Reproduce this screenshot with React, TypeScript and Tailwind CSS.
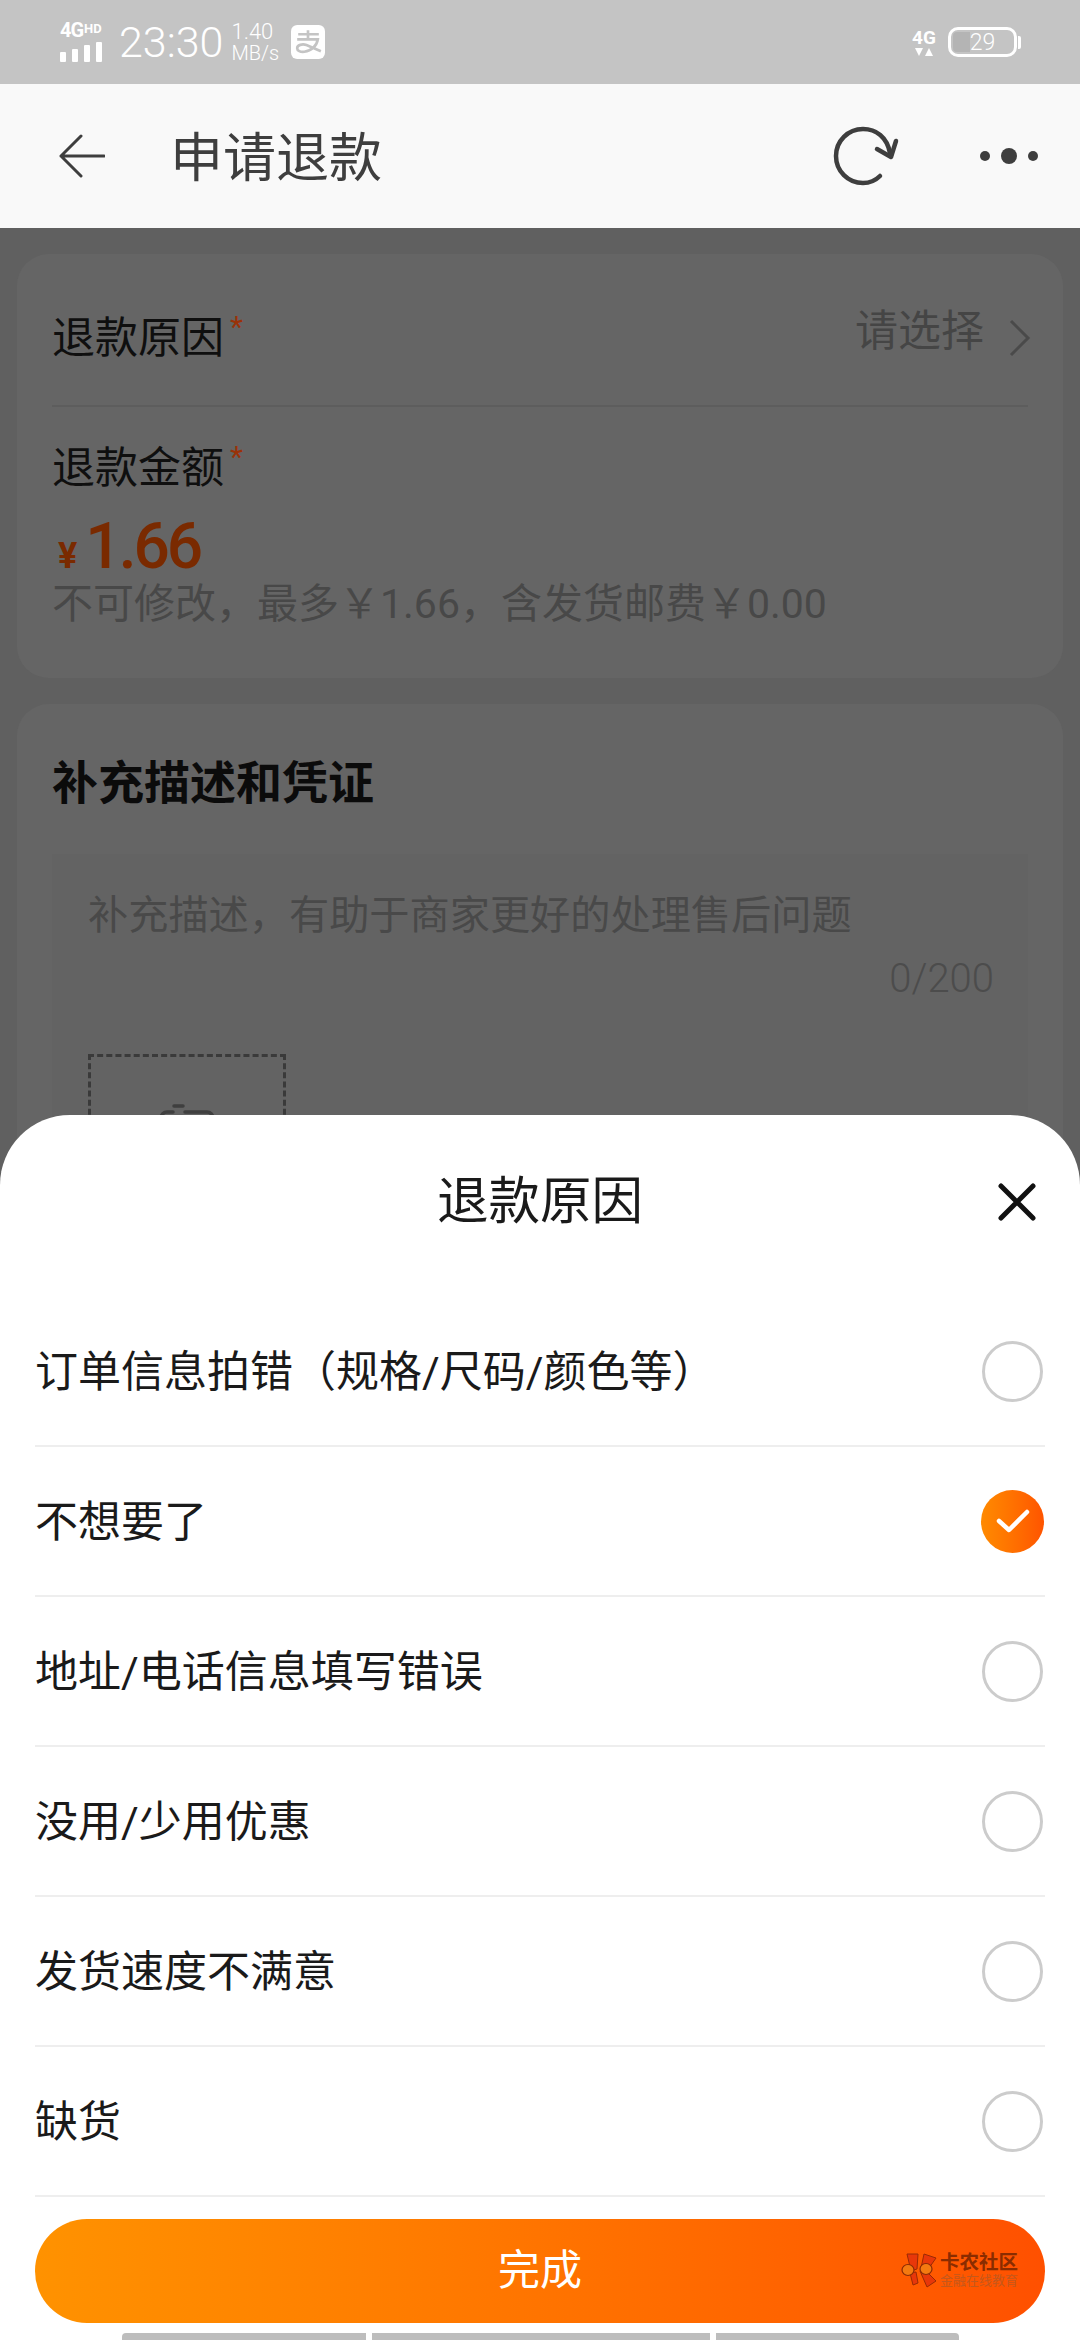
const reasons = [
  { label: "订单信息拍错（规格/尺码/颜色等）", checked: false },
  { label: "不想要了", checked: true },
  { label: "地址/电话信息填写错误", checked: false },
  { label: "没用/少用优惠", checked: false },
  { label: "发货速度不满意", checked: false },
  { label: "缺货", checked: false },
];

function StatusBar() {
  return (
    <div className="flex h-[84px] items-center bg-[#c4c4c4] pl-[60px] pr-[59px] text-white">
      <div className="flex w-[46px] flex-col">
        <div className="flex h-[16px] items-start font-bold leading-[16px]">
          <span className="text-[20px] tracking-[-1px]">4G</span>
          <span className="ml-[1px] text-[13px] leading-[13px]">HD</span>
        </div>
        <div className="mt-[4px] flex items-end gap-[6px]">
          <div className="h-[10px] w-[6px] rounded-[1px] bg-white" />
          <div className="h-[13px] w-[6px] rounded-[1px] bg-white" />
          <div className="h-[17px] w-[6px] rounded-[1px] bg-white" />
          <div className="h-[20px] w-[6px] rounded-[1px] bg-white" />
        </div>
      </div>
      <span className="ml-[13px] text-[43px] font-light leading-[44px]">23:30</span>
      <div className="ml-[8px] flex flex-col items-start font-light">
        <span className="text-[22px] leading-[23px]">1.40</span>
        <span className="text-[20px] leading-[21px]">MB/s</span>
      </div>
      <svg className="ml-[12px]" width="34" height="34" viewBox="0 0 33 33">
        <rect width="33" height="33" rx="6" fill="#fff" />
        <path d="M7 9h20M16.500 5v9M6 14h20c-1 6-6 11-13 12-4 .5-7-1-7-3.500 0-3 5-4.500 9-3l14 6" fill="none" stroke="#c4c4c4" strokeWidth="2.600" />
      </svg>
      <div className="ml-auto flex w-[26px] flex-col items-center">
        <span className="text-[19px] font-bold leading-[19px]">4G</span>
        <div className="mt-[1px] flex gap-[2px]">
          <div className="h-0 w-0 border-x-[4px] border-t-[8px] border-x-transparent border-t-white" />
          <div className="h-0 w-0 border-x-[4px] border-b-[8px] border-x-transparent border-b-white" />
        </div>
      </div>
      <div className="ml-[11px] flex items-center">
        <div className="relative flex h-[30px] w-[69px] items-center justify-center overflow-hidden rounded-[10px] border-[3px] border-white">
          <div className="absolute inset-y-[2px] left-[2px] w-[17px] rounded-l-[4px] bg-[#b4b4b4]" />
          <span className="relative text-[23px] font-light leading-none">29</span>
        </div>
        <div className="ml-[1px] h-[13px] w-[3px] rounded-r-[2px] bg-white" />
      </div>
    </div>
  );
}

function NavBar() {
  return (
    <div className="flex h-[144px] items-center bg-[#f9f9f9] pl-[59px] pr-[42px] text-[#3e3e3e]">
      <svg width="46" height="44" viewBox="0 0 46 44" fill="none" stroke="#3e3e3e" strokeWidth="3" strokeLinecap="round" strokeLinejoin="round">
        <path d="M45 22H2M22 2 2 22l20 20" />
      </svg>
      <span className="ml-[65px] mt-[6px] text-[53px] leading-none">申请退款</span>
      <svg className="ml-auto" width="66" height="60" viewBox="0 0 66 60" fill="none" stroke="#3e3e3e" strokeWidth="4.500" strokeLinecap="round" strokeLinejoin="round">
        <path d="M47 50C42 55 36 57 30 57 15 57 3 45 3 30S15 3 30 3c13 0 24 8 27 24" />
        <path d="M44 23l14 8 5-16" />
      </svg>
      <div className="ml-[81px] flex items-center gap-[11px]">
        <div className="h-[10px] w-[10px] rounded-full bg-[#3e3e3e]" />
        <div className="h-[16px] w-[16px] rounded-full bg-[#3e3e3e]" />
        <div className="h-[10px] w-[10px] rounded-full bg-[#3e3e3e]" />
      </div>
    </div>
  );
}

function Required() {
  return <span className="mb-[22px] ml-[6px] text-[30px] leading-none text-[#9a3208]">*</span>;
}

function RefundCard() {
  return (
    <div className="mx-[17px] mt-[26px] h-[424px] rounded-[32px] bg-[#656565] px-[35px]">
      <div className="flex h-[153px] items-center border-b-[2px] border-[#5d5d5d] pt-[17px]">
        <span className="text-[43px] leading-none text-[#0f0f0f]">退款原因</span>
        <Required />
        <span className="mb-[14px] ml-auto text-[43px] leading-none text-[#454545]">请选择</span>
        <svg className="-mr-[3px] ml-[25px]" width="22" height="38" viewBox="0 0 22 38" fill="none" stroke="#4a4a4a" strokeWidth="3">
          <path d="M2 2l17 17L2 36" />
        </svg>
      </div>
      <div className="mt-[35px] flex items-center">
        <span className="text-[43px] leading-none text-[#0f0f0f]">退款金额</span>
        <Required />
      </div>
      <div className="mt-[21px] flex items-baseline text-[#7a2a00]">
        <span className="ml-[6px] text-[36px] font-bold leading-[64px]">¥</span>
        <span className="ml-[8px] text-[64px] font-medium leading-[64px] tracking-[-3px]">1.66</span>
      </div>
      <div className="-mt-[7px] text-[41px] leading-[46px] text-[#484848]">不可修改，最多￥1.66，含发货邮费￥0.00</div>
    </div>
  );
}

function EvidenceCard() {
  return (
    <div className="mx-[17px] mt-[26px] flex-1 rounded-t-[32px] bg-[#656565] px-[35px]">
      <div className="pt-[56px] text-[46px] font-bold leading-[46px] text-[#0b0b0b]">补充描述和凭证</div>
      <div className="mt-[48px] flex h-[400px] flex-col bg-[#636363] pl-[36px] pr-[34px]">
        <div className="pt-[38px] text-[40.200px] leading-[48px] text-[#494949]">补充描述，有助于商家更好的处理售后问题</div>
        <div className="mt-[17px] self-end text-[40px] font-light leading-[44px] text-[#4c4c4c]">0/200</div>
        <div className="mt-[53px] flex h-[198px] w-[198px] justify-center border-[3px] border-dashed border-[#3a3a3a] pt-[47px]">
          <svg width="56" height="46" viewBox="0 0 56 46" fill="none" stroke="#3f3f3f" strokeWidth="3.500" strokeLinecap="round">
            <path d="M14 8H8a6 6 0 0 0-6 6v30M26 8h22a6 6 0 0 1 6 6v30M15 2h9" />
          </svg>
        </div>
      </div>
    </div>
  );
}

function ReasonRow({ label, checked }: { label: string; checked: boolean }) {
  return (
    <div className="flex h-[150px] items-center justify-between border-b-[2px] border-[#eeeeee] pr-[1px] text-[43px] text-[#1a1a1a]">
      <span className="mt-[2px] leading-none">{label}</span>
      {checked ? (
        <div className="flex h-[63px] w-[63px] items-center justify-center rounded-full bg-linear-to-r from-[#ff8a00] to-[#ff5400]">
          <svg width="34" height="26" viewBox="0 0 34 26" fill="none" stroke="#fff" strokeWidth="4.500" strokeLinecap="round" strokeLinejoin="round">
            <path d="M3 13l10 9L31 4" />
          </svg>
        </div>
      ) : (
        <div className="mx-[1px] h-[61px] w-[61px] rounded-full border-[3px] border-[#cccccc]" />
      )}
    </div>
  );
}

function WatermarkLogo() {
  return (
    <div className="flex items-center">
      <svg width="36" height="35" viewBox="0 0 36 35">
        <path d="M6 1h11l-1 15-6 2zM23 1l12 4-9 13-6-3zM9 20l6-1 2 11-5 2zM19 18l5-1 11 11-9 6z" fill="#e8370a" stroke="#9a2a05" strokeWidth="1" />
        <ellipse cx="7" cy="17" rx="6" ry="5.500" fill="#f47a10" stroke="#8a2a05" strokeWidth="1.200" />
        <ellipse cx="25" cy="16" rx="6" ry="5.500" fill="#f47a10" stroke="#8a2a05" strokeWidth="1.200" />
      </svg>
      <div className="ml-[3px] flex w-[79px] flex-col items-start">
        <span className="text-[19.500px] font-bold leading-[21px] text-[#8a2c00]">卡农社区</span>
        <span className="text-[13px] leading-[15px] text-[#c4581c]">金融在线教育</span>
      </div>
    </div>
  );
}

function ReasonSheet() {
  return (
    <div className="absolute inset-x-0 bottom-0 flex h-[1225px] flex-col rounded-t-[70px] bg-white">
      <div className="relative flex h-[182px] items-start justify-center pt-[61px]">
        <span className="text-[51.500px] leading-[52px] text-[#1a1a1a]">退款原因</span>
        <svg className="absolute right-[44px] top-[68px]" width="38" height="38" viewBox="0 0 38 38" fill="none" stroke="#111" strokeWidth="5" strokeLinecap="round">
          <path d="M3 3l32 32M35 3 3 35" />
        </svg>
      </div>
      <div className="mx-[35px] flex flex-col">
        {reasons.map((r) => (
          <ReasonRow key={r.label} label={r.label} checked={r.checked} />
        ))}
      </div>
      <div className="relative mx-[35px] mt-[22px] flex h-[104px] items-center justify-center rounded-full bg-linear-to-r from-[#ff9200] to-[#ff5000]">
        <span className="text-[42px] leading-none text-white">完成</span>
        <div className="absolute right-[26px] top-[33px]">
          <WatermarkLogo />
        </div>
      </div>
      <div className="mt-[10px] flex justify-center gap-[6px]">
        <div className="h-[7px] w-[244px] rounded-tl-[4px] bg-[#bdbdbd]" />
        <div className="h-[7px] w-[338px] bg-[#bdbdbd]" />
        <div className="h-[7px] w-[243px] rounded-tr-[4px] bg-[#bdbdbd]" />
      </div>
    </div>
  );
}

export default function App() {
  return (
    <div className="relative flex h-[2340px] w-[1080px] flex-col overflow-hidden bg-[#606060] font-['Roboto','Noto_Sans_CJK_SC',sans-serif]">
      <StatusBar />
      <NavBar />
      <RefundCard />
      <EvidenceCard />
      <ReasonSheet />
    </div>
  );
}
